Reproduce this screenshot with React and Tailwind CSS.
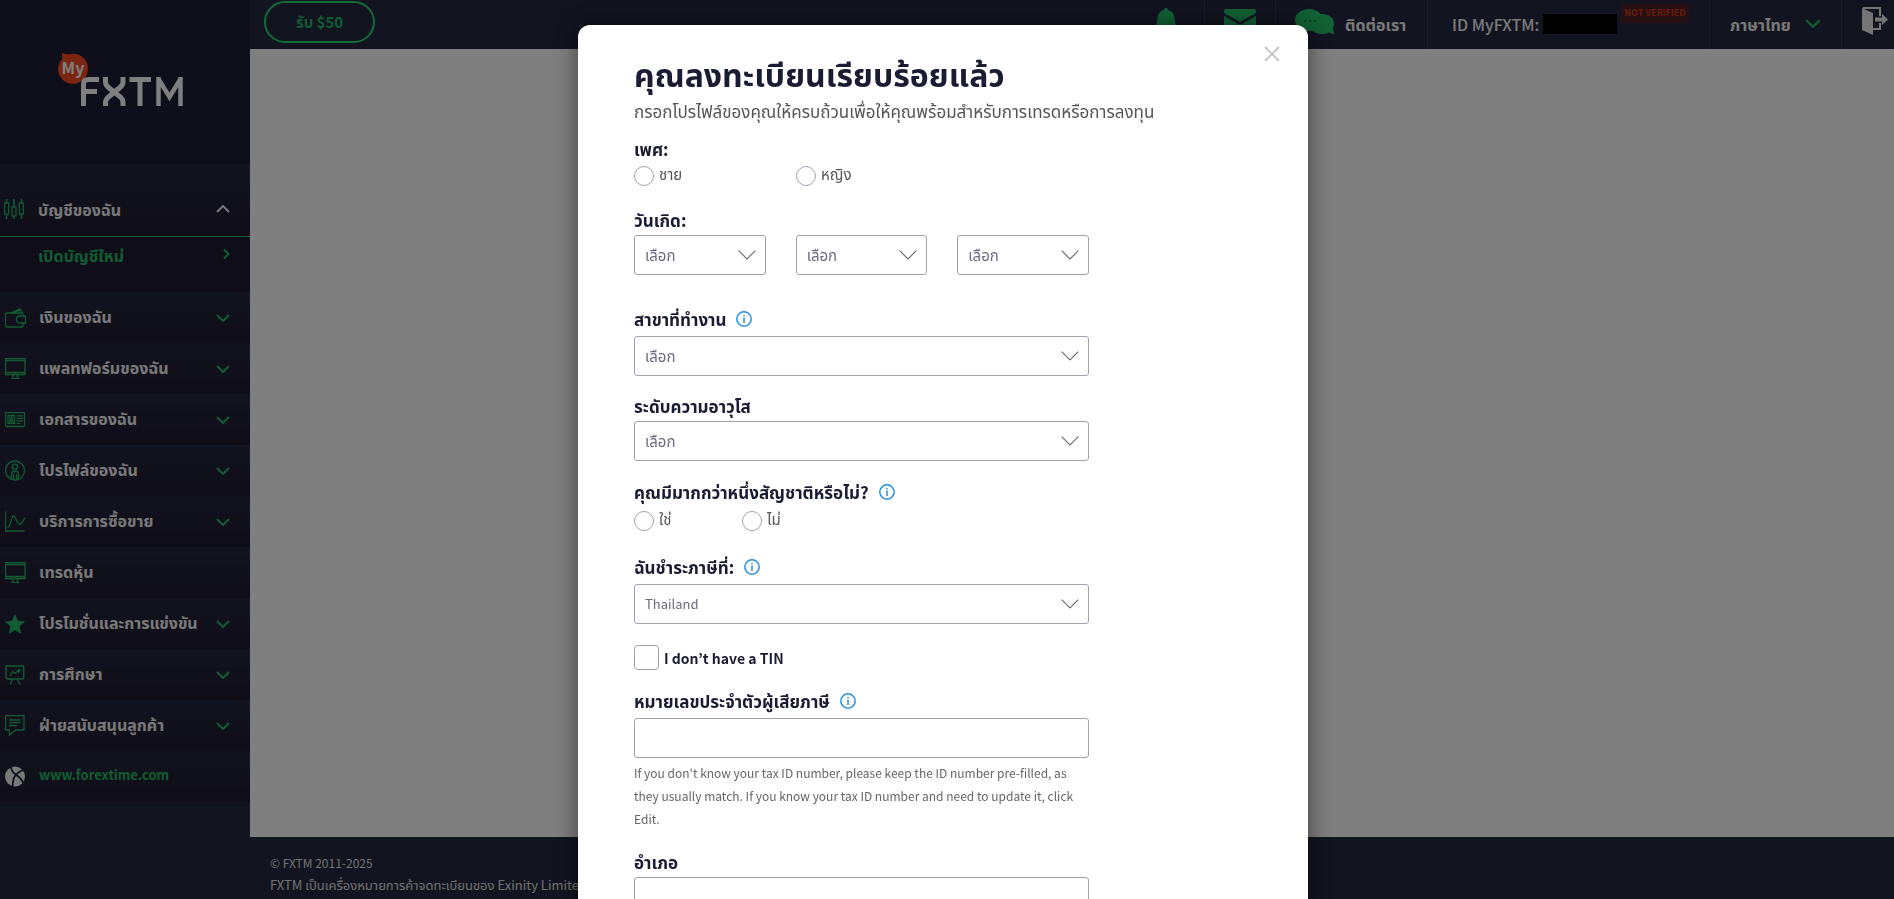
import { useState } from "react";

const stroke = {
  fill: "none",
  stroke: "currentColor",
  strokeWidth: 1.3,
};

const icons = {
  candles: (
    <svg viewBox="0 0 20 22" className="h-[22px] w-5" {...stroke}>
      <path d="M2.5 1v4M2.5 16v5M10 1v8M10 18v3M17.5 1v4M17.5 16v5" strokeWidth="1.6" />
      <rect x="0.7" y="5" width="4" height="11" />
      <rect x="8" y="9" width="4" height="9" />
      <rect x="15.3" y="5" width="4" height="11" />
    </svg>
  ),
  wallet: (
    <svg viewBox="0 0 21 20" className="h-5 w-[21px]" {...stroke}>
      <path d="M18 8V6.500q0-1.500-1.500-1.500H2Q.5 5 .5 6.500V17q0 2 2 2h13.500q2 0 2-2v-2" />
      <path d="M6 5l9-4.200L17.500 5M8.500 5L15.500 2" />
      <path d="M20.500 8h-6q-3 0-3 3.500t3 3.500h6z" />
    </svg>
  ),
  monitor: (
    <svg viewBox="0 0 21 21" className="h-[21px] w-[21px]" {...stroke}>
      <path d="M.5.5h19.500v16H.5zM.5 2.500h19.500M.5 14.500h19.500M8 16.500v3M12.500 16.500v3M6 20.300h8.500" />
    </svg>
  ),
  card: (
    <svg viewBox="0 0 21 16" className="h-4 w-[21px]" {...stroke}>
      <rect x="0.5" y="0.500" width="19" height="14" rx="1" />
      <rect x="3" y="3.500" width="6.500" height="8" />
      <circle cx="6.200" cy="6.300" r="1.300" />
      <path d="M4 11.500q.2-3 2.200-3t2.300 3M11.500 3.800h6.500M11.500 6.300h6.500M11.500 8.800h6.500M11.500 11.300h4" />
    </svg>
  ),
  person: (
    <svg viewBox="0 0 21 21" className="h-[21px] w-[21px]" {...stroke}>
      <circle cx="10" cy="10.500" r="9.500" />
      <circle cx="10" cy="6.800" r="2.700" />
      <path d="M6.500 18.800v-5q0-2.300 2-2.300h3q2 0 2 2.300v5M8.500 14v5.500M11.500 14v5.500" />
    </svg>
  ),
  curve: (
    <svg viewBox="0 0 21 21" className="h-[21px] w-[21px]" {...stroke}>
      <path d="M.5.5v19.500h19" />
      <path d="M2.500 16.500C6 16 6 5 8.500 5s3.500 8.500 6 8.500c2 0 3-3.500 5.500-6.500" />
    </svg>
  ),
  star: (
    <svg viewBox="0 0 20 20" className="h-5 w-5" fill="currentColor">
      <path d="M10 0l2.900 6.700 7.100.7-5.400 4.800L16.200 20 10 16l-6.200 4 1.600-7.800L0 7.400l7.100-.7z" />
    </svg>
  ),
  board: (
    <svg viewBox="0 0 20 20" className="h-5 w-5" {...stroke}>
      <path d="M.5 1h18.500M1 1v11q0 2 2 2h14q1.700 0 1.700-2V1M7.500 14.500L5 19.500M12.500 14.500l2.500 5" />
      <path d="M5 11l2.500-4.500 2.500 2 3.500-3.500v2.500l2-3.500" />
    </svg>
  ),
  chat: (
    <svg viewBox="0 0 20 21" className="h-[21px] w-5" {...stroke}>
      <path d="M.5.5h18.500v14.500H11l-6.500 5V15h-4z" />
      <path d="M4 5h11.500M4 7.700h11.500M4 10.500h8" />
    </svg>
  ),
  globe: (
    <svg viewBox="0 0 20 21" className="h-[21px] w-5">
      <circle cx="10" cy="10.500" r="10" fill="#f2f2f2" />
      <path
        d="M6 1c0 8 10 8 12 16M18 4C9 8 8 12 7.500 21"
        fill="none"
        stroke="#1e2036"
        strokeWidth="1.800"
      />
    </svg>
  ),
};

const menu = [
  { icon: "wallet", label: "เงินของฉัน", open: true },
  { icon: "monitor", label: "แพลทฟอร์มของฉัน", open: true },
  { icon: "card", label: "เอกสารของฉัน", open: true },
  { icon: "person", label: "โปรไฟล์ของฉัน", open: true },
  { icon: "curve", label: "บริการการซื้อขาย", open: true },
  { icon: "monitor", label: "เทรดหุ้น" },
  { icon: "star", label: "โปรโมชั่นและการแข่งขัน", open: true },
  { icon: "board", label: "การศึกษา", open: true },
  { icon: "chat", label: "ฝ่ายสนับสนุนลูกค้า", open: true },
];

function Chevron({ className }) {
  return (
    <svg viewBox="0 0 14 8" className={className} fill="none" stroke="currentColor" strokeWidth="2">
      <path d="M1 1l6 6 6-6" />
    </svg>
  );
}

function Logo() {
  return (
    <a href="#" aria-label="MyFXTM" className="ml-[58px] block w-[126px]">
      <svg viewBox="0 0 126 54" className="h-[54px] w-[126px]">
        <path
          d="M4 0q5 2 11 .7A15 15 0 1 1 0 15Q.5 10 4 6z"
          fill="#f94a20"
        />
        <text x="3.500" y="21" fontSize="16" fontWeight="700" fill="#fff">
          My
        </text>
        <g fill="none" stroke="#fff" strokeWidth="5">
          <path d="M25.500 53V31q0-4.500 5-4.500H41M25.500 38.500H39" />
          <path d="M47.500 24v5q0 3 3 5.500l12 9.500q2.500 2.500 2.500 5.500V53M65 24v5q0 3-3 5.500l-11.500 9.500q-3 2.500-3 5.500V53" />
          <path d="M71.500 26.500h21.500M82 26.500V53" />
          <path d="M100.500 53V24M122.500 53V24M100.500 26l11 18 11-18" strokeWidth="4.500" />
        </g>
      </svg>
    </a>
  );
}

function Sidebar() {
  return (
    <aside className="w-[250px] shrink-0 bg-[#242840] text-base font-bold">
      <div className="h-[164px] bg-[#1c1f37] pt-[53px]">
        <Logo />
      </div>
      <nav>
        <button className="flex h-[73px] w-full items-center border-b border-[#24b866] bg-linear-to-b from-[#242840] to-[#1f1b2e] pt-[18px] pr-5 pl-1 text-left text-[#f2f2f2]">
          <span className="flex w-[34px] text-[#24b866]">{icons.candles}</span>
          <span className="flex-1 leading-5">บัญชีของฉัน</span>
          <Chevron className="h-2 w-3.5 rotate-180" />
        </button>
        <a
          href="#"
          className="flex h-[55px] items-start bg-[#1e1b30] pt-2 pr-5 pl-[38px] leading-5 text-[#24b866]"
        >
          <span className="flex-1">เปิดบัญชีใหม่</span>
          <svg viewBox="0 0 7 10" className="mt-1 h-2.5 w-[7px]" fill="none" stroke="currentColor" strokeWidth="2">
            <path d="M1 .5L5.500 5 1 9.500" />
          </svg>
        </a>
        {menu.map((item, i) => (
          <button
            key={i}
            className="flex h-[51px] w-full items-center bg-linear-to-b from-[#242840] to-[#1f1b2e] pr-5 pl-[5px] text-left whitespace-nowrap text-[#f2f2f2]"
          >
            <span className="flex w-[34px] text-[#24b866]">{icons[item.icon]}</span>
            <span className="flex-1 pb-1 leading-5">{item.label}</span>
            {item.open && <Chevron className="h-2 w-3.5 text-[#24b866]" />}
          </button>
        ))}
        <a
          href="#"
          className="flex h-[51px] items-center bg-linear-to-b from-[#242840] to-[#1f1b2e] pl-[5px] text-[#24b866]"
        >
          <span className="flex w-[34px]">{icons.globe}</span>
          <span className="pb-1 text-[13px] leading-5">www.forextime.com</span>
        </a>
      </nav>
    </aside>
  );
}

function Header() {
  return (
    <header className="flex h-[49px] shrink-0 bg-[#242840] text-base text-[#f2f2f2]">
      <div className="flex-1 pt-px pl-3.5">
        <button className="h-[42px] w-[111px] rounded-full border-2 border-[#24d870] text-[15px] font-bold text-[#24b866]">
          รับ $50
        </button>
      </div>
      <button aria-label="การแจ้งเตือน" className="flex w-[76px] justify-center pt-2">
        <svg viewBox="0 0 20 24" className="h-6 w-5" fill="#24c46a">
          <path d="M10 0q2 0 2 2 6 1.500 6.500 8L20 20H0L1.500 10Q2 3.500 8 2q0-2 2-2z" />
        </svg>
      </button>
      <button aria-label="ข้อความ" className="flex w-[71px] justify-center border-l border-[#34384f] pt-[9px]">
        <svg viewBox="0 0 32 22" className="h-[22px] w-8" fill="#24c46a">
          <path d="M2 0h28q2 0 2 2v2L16 13 0 4V2q0-2 2-2z" />
          <path d="M0 7l16 9 16-9v13q0 2-2 2H2q-2 0-2-2z" />
        </svg>
      </button>
      <a href="#" className="flex w-[152px] border-l border-[#34384f] pl-[19px] font-bold">
        <svg viewBox="0 0 40 26" className="mt-[9px] h-[26px] w-10" fill="#24c46a">
          <path d="M14 0c8 0 14 5 14 11s-6 11-14 11q-4 0-7-1.500L1 25l2-7Q0 15 0 11C0 5 6 0 14 0z" />
          <path d="M27 5c7 0 12 4 12 9.500q0 3-1 5l1 6-5-2q-3 1.500-7 1.500c-7 0-12-4-12-10S20 5 27 5z" />
          <path d="M9 12h2M14 12h2M19 12h2" stroke="#1c6b40" strokeWidth="1.500" />
        </svg>
        <span className="mt-3.5 ml-2.5 leading-5">ติดต่อเรา</span>
      </a>
      <div className="flex w-[282px] border-l border-[#34384f] pl-6">
        <span className="mt-3.5 w-[91px] leading-5 font-medium whitespace-nowrap">ID MyFXTM: (</span>
        <span className="mt-3.5 h-5 w-[74px] bg-black" />
        <span className="mt-1 ml-1 h-[19px] w-[68px] bg-[#4d2028] text-center text-[9px] leading-[18px] font-bold whitespace-nowrap text-[#d03a18]">
          NOT VERIFIED
        </span>
      </div>
      <button className="flex w-[132px] border-l border-[#34384f] pl-5 font-bold">
        <span className="mt-3.5 w-[75px] text-left leading-5">ภาษาไทย</span>
        <Chevron className="mt-[19px] h-[9px] w-4 text-[#24b866]" />
      </button>
      <button aria-label="ออกจากระบบ" className="flex w-[53px] border-l border-[#34384f] pt-[7px] pl-5">
        <svg viewBox="0 0 26 28" className="h-7 w-[26px]">
          <path d="M1 1h17v8M18 16v6h-7" fill="none" stroke="#e8e8e8" strokeWidth="2" />
          <path d="M0 1l11 5v22L0 23z" fill="#e8e8e8" />
          <path d="M13 10.500h7V7l6 5.500-6 5.500v-3.500h-7z" fill="#e8e8e8" />
        </svg>
      </button>
    </header>
  );
}

function InfoIcon() {
  return (
    <button aria-label="info" type="button" className="ml-2.5">
      <svg viewBox="0 0 16 16" className="h-4 w-4" fill="none" stroke="#2490e0" strokeWidth="1.500">
        <circle cx="8" cy="8" r="7.200" />
        <path d="M8 6.500V12M8 4v1.200" />
      </svg>
    </button>
  );
}

function Label({ id, info, children }) {
  return (
    <div className="flex h-5 items-center">
      <label htmlFor={id} className="text-[17px] leading-5 font-bold whitespace-nowrap text-[#1a1c33]">
        {children}
      </label>
      {info && <InfoIcon />}
    </div>
  );
}

function Select({ id, value = "เลือก", label, className = "text-[15px]" }) {
  return (
    <div className="relative">
      <select
        id={id}
        aria-label={label}
        className={`h-10 w-full appearance-none rounded-[3px] border border-[#a2a2b0] bg-white pl-2.5 text-[#6c6a80] ${className}`}
      >
        <option>{value}</option>
      </select>
      <svg
        viewBox="0 0 18 10"
        className="pointer-events-none absolute top-[15px] right-2.5 h-2.5 w-[18px]"
        fill="none"
        stroke="#6d6d78"
        strokeWidth="1.200"
      >
        <path d="M.7.7L9 9 17.300.7" />
      </svg>
    </div>
  );
}

function Radio({ name, className = "", children }) {
  return (
    <label className={`flex gap-[5px] text-[15px] text-[#555] ${className}`}>
      <input
        type="radio"
        name={name}
        className="h-5 w-5 appearance-none rounded-full border border-[#a2a2b0] checked:border-[6px]"
      />
      <span className="leading-4">{children}</span>
    </label>
  );
}

function TextInput({ id }) {
  return <input id={id} type="text" className="h-10 w-full rounded-[3px] border border-[#a2a2b0] px-2.5 text-sm" />;
}

function ProfileModal({ onClose }) {
  return (
    <div className="fixed inset-0 overflow-y-auto bg-black/50 pt-[25px] pr-2 [scrollbar-width:none]">
      <div
        role="dialog"
        aria-labelledby="modal-title"
        className="relative mx-auto w-full max-w-[730px] rounded-xl bg-white px-14 pt-[30px] pb-16 shadow-[0_0_24px_rgba(0,0,0,0.5)]"
      >
        <button aria-label="ปิด" onClick={onClose} className="absolute top-[21px] right-7">
          <svg viewBox="0 0 16 16" className="h-4 w-4" fill="none" stroke="#c4c4c4" strokeWidth="1.800">
            <path d="M1 1l14 14M15 1L1 15" />
          </svg>
        </button>
        <h1 id="modal-title" className="text-[32px] leading-9 font-bold text-[#1a1c33]">
          คุณลงทะเบียนเรียบร้อยแล้ว
        </h1>
        <p className="mt-2.5 text-[17px] leading-5 whitespace-nowrap text-[#555]">
          กรอกโปรไฟล์ของคุณให้ครบถ้วนเพื่อให้คุณพร้อมสำหรับการเทรดหรือการลงทุน
        </p>
        <form className="mt-[18px] max-w-[455px]">
          <Label>เพศ:</Label>
          <div className="mt-[7px] flex">
            <Radio name="gender" className="w-[162px]">
              ชาย
            </Radio>
            <Radio name="gender">หญิง</Radio>
          </div>
          <div className="mt-6">
            <Label id="day">วันเกิด:</Label>
          </div>
          <div className="mt-[5px] grid grid-cols-3 gap-[30px]">
            <Select id="day" />
            <Select label="เดือน" />
            <Select label="ปี" />
          </div>
          <div className="mt-[34px]">
            <Label id="industry" info>
              สาขาที่ทำงาน
            </Label>
          </div>
          <div className="mt-[7px]">
            <Select id="industry" />
          </div>
          <div className="mt-5">
            <Label id="seniority">ระดับความอาวุโส</Label>
          </div>
          <div className="mt-[5px]">
            <Select id="seniority" />
          </div>
          <div className="mt-[21px]">
            <Label info>คุณมีมากกว่าหนึ่งสัญชาติหรือไม่?</Label>
          </div>
          <div className="mt-[9px] flex">
            <Radio name="nationality" className="w-[108px]">
              ใช่
            </Radio>
            <Radio name="nationality">ไม่</Radio>
          </div>
          <div className="mt-[26px]">
            <Label id="tax-country" info>
              ฉันชำระภาษีที่:
            </Label>
          </div>
          <div className="mt-[7px]">
            <Select id="tax-country" value="Thailand" className="text-[13px]" />
          </div>
          <label className="mt-[21px] flex items-center gap-[5px] text-sm leading-5 font-bold text-[#1a1c33]">
            <input
              type="checkbox"
              className="h-[25px] w-[25px] appearance-none rounded-[4px] border border-[#a2a2b0] checked:bg-[#24b866]"
            />
            I don’t have a TIN
          </label>
          <div className="mt-[21px]">
            <Label id="tin" info>
              หมายเลขประจำตัวผู้เสียภาษี
            </Label>
          </div>
          <div className="mt-[7px]">
            <TextInput id="tin" />
          </div>
          <p className="mt-[3px] text-xs leading-[23px] text-[#666]">
            If you don't know your tax ID number, please keep the ID number pre-filled, as they usually match. If you
            know your tax ID number and need to update it, click Edit.
          </p>
          <div className="mt-[22px]">
            <Label id="district">อำเภอ</Label>
          </div>
          <div className="mt-[5px]">
            <TextInput id="district" />
          </div>
        </form>
      </div>
    </div>
  );
}

export default function App() {
  const [open, setOpen] = useState(true);

  return (
    <div className="flex h-screen overflow-hidden bg-white font-['Noto_Sans_CJK_JP','Noto_Sans_Thai',sans-serif]">
      <Sidebar />
      <div className="flex min-w-0 flex-1 flex-col">
        <Header />
        <main className="flex-1 bg-white" />
        <footer className="h-[62px] shrink-0 bg-[#242840] px-5 pt-[15px] leading-[22px] text-[#e0e0e0]">
          <p className="text-xs leading-[22px]">© FXTM 2011-2025</p>
          <p className="text-[13px] leading-[22px]">FXTM เป็นเครื่องหมายการค้าจดทะเบียนของ Exinity Limited</p>
        </footer>
      </div>
      {open && <ProfileModal onClose={() => setOpen(false)} />}
    </div>
  );
}
